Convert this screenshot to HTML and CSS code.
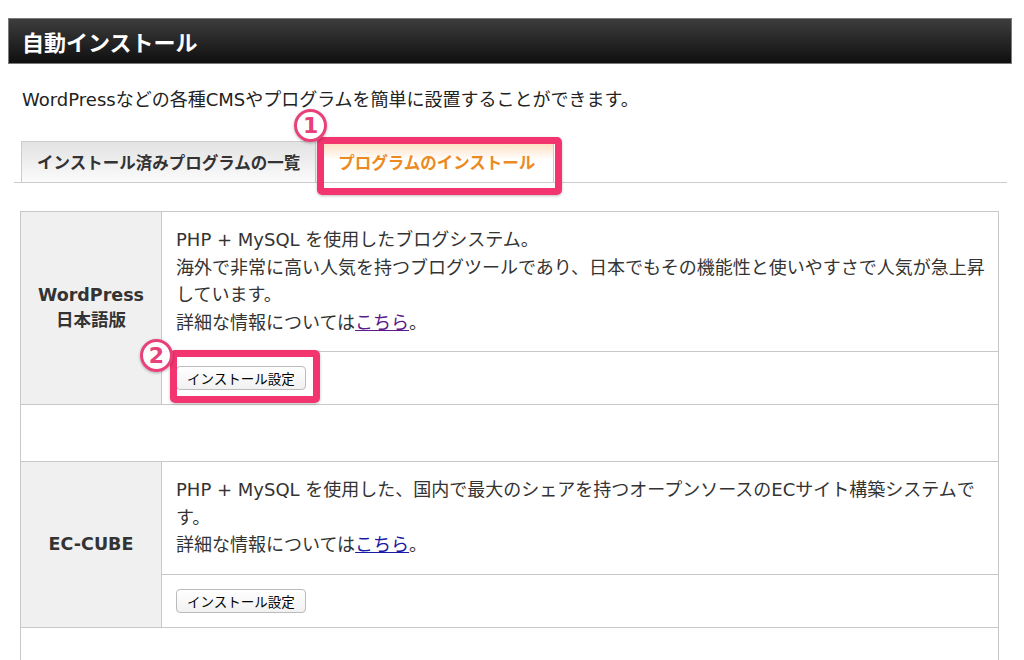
FILE: index.html
```html
<!DOCTYPE html>
<html lang="ja">
    <head>
        <meta charset="utf-8">
        <link rel="stylesheet" href="styles.css">
    </head>
    <body>
        <h1 class="title">自動インストール</h1>
        <p class="intro">WordPressなどの各種CMSやプログラムを簡単に設置することができます。</p>

        <div class="tabs">
            <div class="tab">インストール済みプログラムの一覧</div>
            <div class="tab active">プログラムのインストール
                <span class="mark mark-tab"></span>
                <span class="num num-tab">1</span>
            </div>
        </div>

        <table class="programs">
            <tr>
                <th rowspan="2">WordPress<br>日本語版</th>
                <td class="desc">PHP + MySQL を使用したブログシステム。<br>
                    海外で非常に高い人気を持つブログツールであり、日本でもその機能性と使いやすさで人気が急上昇しています。<br>
                    詳細な情報については<a class="visited" href="#">こちら</a>。</td>
            </tr>
            <tr>
                <td class="act">
                    <span class="btn-wrap">
                        <button class="btn">インストール設定</button>
                        <span class="mark mark-btn"></span>
                        <span class="num num-btn">2</span>
                    </span>
                </td>
            </tr>
            <tr class="spacer"><td colspan="2"></td></tr>
            <tr>
                <th rowspan="2">EC-CUBE</th>
                <td class="desc">PHP + MySQL を使用した、国内で最大のシェアを持つオープンソースのECサイト構築システムです。<br>
                    詳細な情報については<a href="#">こちら</a>。</td>
            </tr>
            <tr>
                <td class="act"><button class="btn">インストール設定</button></td>
            </tr>
            <tr class="spacer"><td colspan="2"></td></tr>
        </table>
    </body>
</html>
```

FILE: styles.css
```css
body{
    margin: 8px;
    background: #fff;
    color: #333;
    font-family: "DejaVu Sans", "Noto Sans CJK JP", sans-serif;
}
h1.title{
    margin: 10px 4px 0 0;
    height: 44px;
    line-height: 44px;
    padding: 0 0 0 13px;
    border: 1px solid #7a7a7a;
    background: linear-gradient(#3d3d3d, #0f0f0f);
    color: #fff;
    font-size: 22px;
    font-weight: bold;
    font-family: "Noto Sans CJK JP", sans-serif;
}
p.intro{
    margin: 22px 0 0 14px;
    font-size: 18px;
    line-height: 27px;
    color: #222;
}
div.tabs{
    display: flex;
    gap: 5px;
    margin: 28px 9px 0 6px;
    padding: 0 0 0 7px;
    border-bottom: 1px solid #ccc;
}
div.tab{
    position: relative;
    height: 40px;
    line-height: 40px;
    padding: 0 15px;
    border: 1px solid #ccc;
    border-bottom: none;
    background: linear-gradient(#e2e2e2, #fbfbfb);
    font-family: "Noto Sans CJK JP", sans-serif;
    font-size: 16.5px;
    font-weight: bold;
    color: #333;
}
div.tab.active{
    padding: 0 18px 0 16px;
    background: linear-gradient(#fcdcbc, #fff 45%, #fff);
    color: #ec8a22;
}
span.mark{
    position: absolute;
    border: 7px solid #f2346f;
    border-radius: 5px;
    box-shadow: 0 1px 3px rgba(0,0,0,0.25);
}
span.mark-tab{
    left: -5px;
    top: -5px;
    width: 231px;
    height: 44px;
}
span.num{
    position: absolute;
    width: 27px;
    height: 27px;
    line-height: 27px;
    border: 3px solid #e7407a;
    border-radius: 50%;
    background: rgba(255,255,255,0.85);
    box-shadow: 0 1px 3px rgba(0,0,0,0.3);
    color: #e7407a;
    font-family: "DejaVu Sans", sans-serif;
    font-size: 22px;
    font-weight: bold;
    text-align: center;
}
span.num-tab{
    left: -28px;
    top: -33px;
}
table.programs{
    width: 979px;
    margin: 28px 0 0 12px;
    border-collapse: collapse;
}
table.programs th,
table.programs td{
    border: 1px solid #c8c8c8;
}
table.programs th{
    width: 138px;
    background: #f0f0f0;
    color: #333;
    font-size: 17.5px;
    line-height: 25px;
    font-weight: bold;
    text-align: center;
    vertical-align: middle;
}
td.desc{
    padding: 14px 7px 15px 14px;
    font-size: 18px;
    line-height: 27.5px;
    color: #333;
}
td.desc a{
    color: #1a1aa6;
}
td.desc a.visited{
    color: #5a1a8b;
}
td.act{
    height: 52px;
    padding: 0 0 0 14px;
    vertical-align: middle;
}
tr.spacer td{
    height: 56px;
    padding: 0;
}
span.btn-wrap{
    position: relative;
    display: inline-block;
}
button.btn{
    display: block;
    height: 24px;
    padding: 0 10px;
    border: 1px solid #bbb;
    border-radius: 4px;
    background: linear-gradient(#fff, #f1f1f1);
    font-family: "Noto Sans CJK JP", sans-serif;
    font-size: 13.5px;
    color: #000;
}
span.mark-btn{
    left: -6px;
    top: -16px;
    width: 136px;
    height: 39px;
}
span.num-btn{
    left: -36px;
    top: -27px;
}
```
